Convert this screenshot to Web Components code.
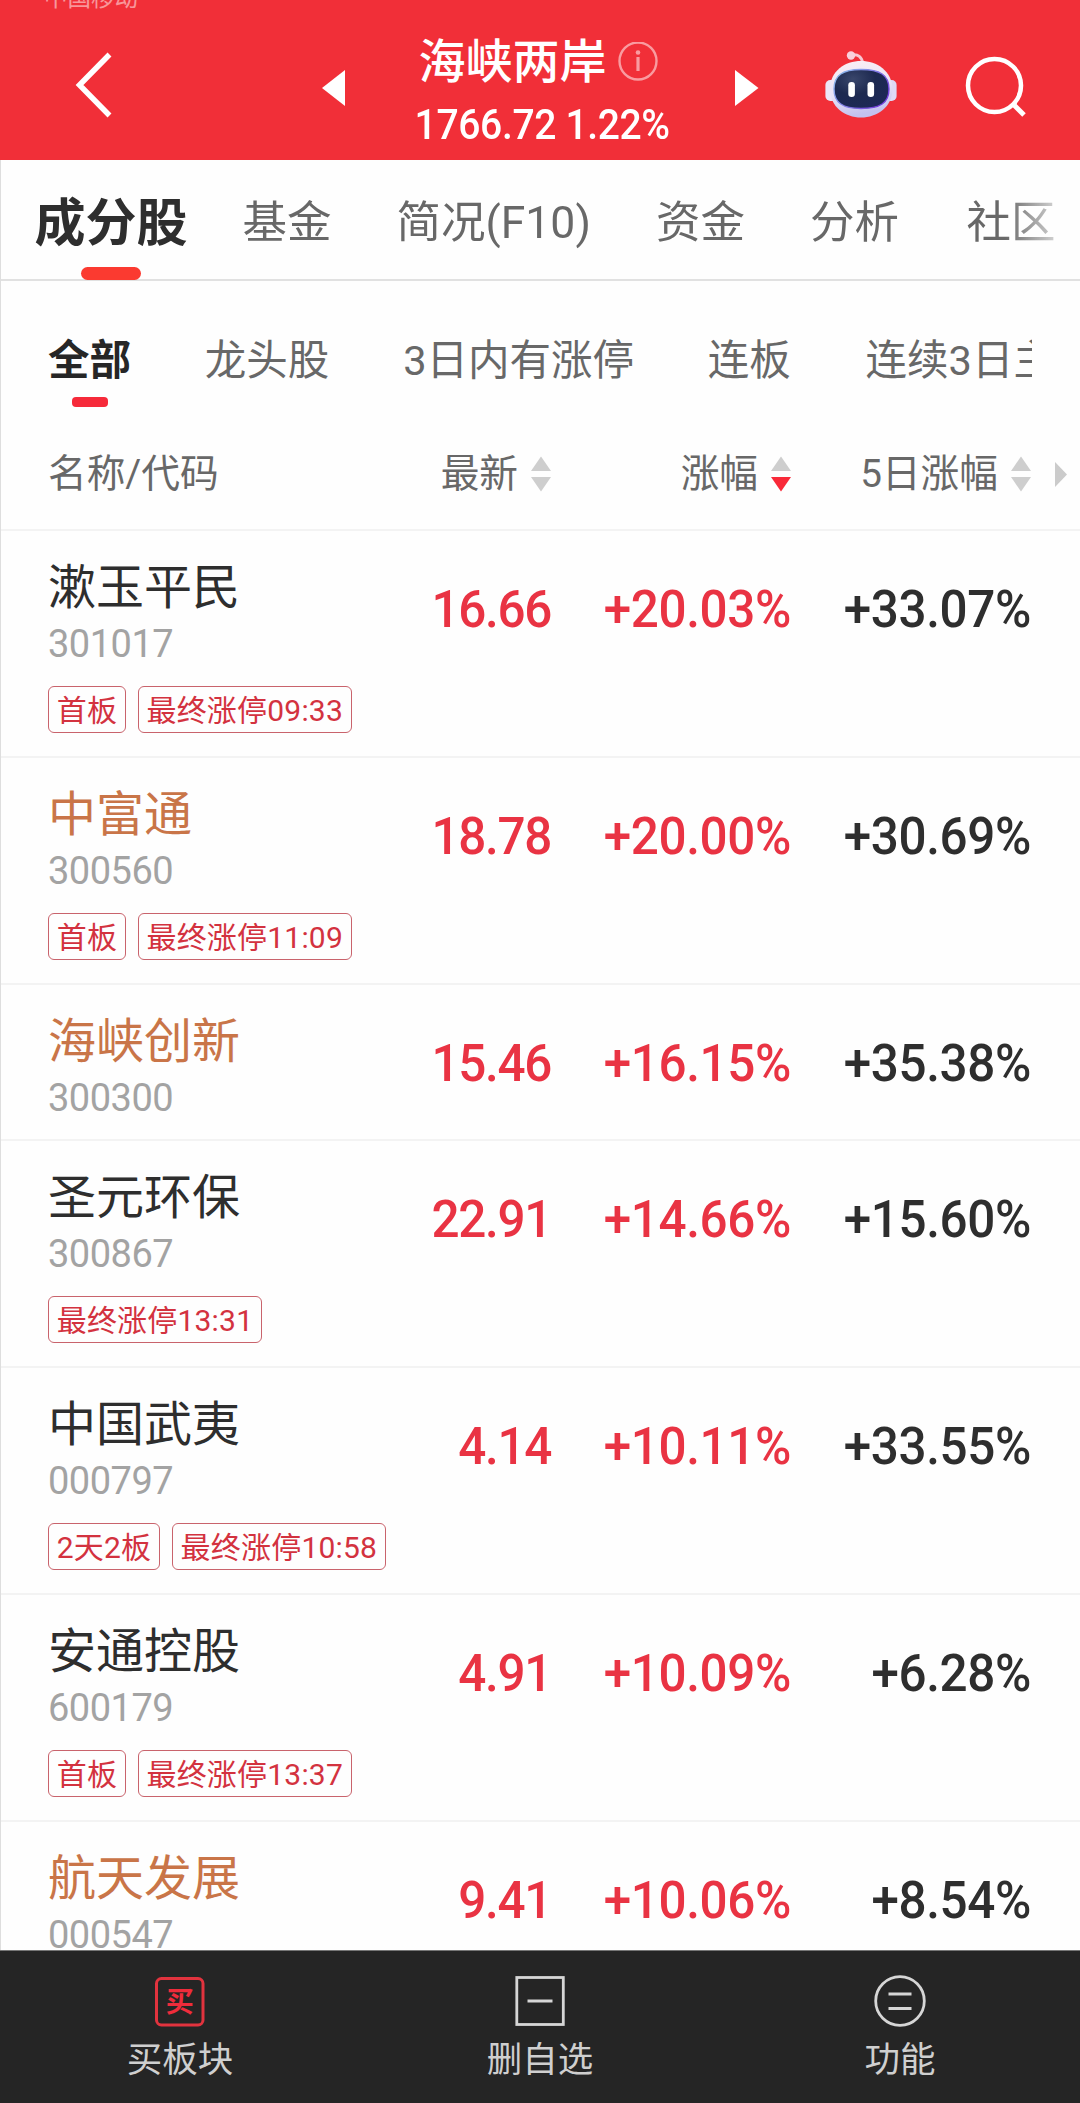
<!DOCTYPE html>
<html lang="zh-CN">
<head>
<meta charset="utf-8">
<title>海峡两岸</title>
<style>
    html, body {
        margin: 0;
        padding: 0;
        background: #fefefe;
    }
    body {
        width: 1080px;
        height: 2103px;
        overflow: hidden;
        font-family: Roboto, "Noto Sans CJK SC", sans-serif;
        color: #2e2e2e;
    }
</style>
</head>
<body>
<stock-app>
    <board-header slot="header" carrier="中国移动" name="海峡两岸" quote="1766.72 1.22%"></board-header>

    <tab-strip slot="tabs">
        <tab-item active>成分股</tab-item>
        <tab-item>基金</tab-item>
        <tab-item>简况(F10)</tab-item>
        <tab-item>资金</tab-item>
        <tab-item>分析</tab-item>
        <tab-item>社区</tab-item>
    </tab-strip>

    <filter-strip slot="filters">
        <filter-item active>全部</filter-item>
        <filter-item>龙头股</filter-item>
        <filter-item>3日内有涨停</filter-item>
        <filter-item>连板</filter-item>
        <filter-item>连续3日主</filter-item>
    </filter-strip>

    <list-head slot="head">
        <span>名称/代码</span>
        <sort-label slot="cols">最新</sort-label>
        <sort-label slot="cols" dir="down">涨幅</sort-label>
        <sort-label slot="cols">5日涨幅</sort-label>
    </list-head>

    <stock-row name="漱玉平民" code="301017" price="16.66" change="+20.03%" five="+33.07%">
        <stock-tag>首板</stock-tag><stock-tag>最终涨停09:33</stock-tag>
    </stock-row>
    <stock-row hot name="中富通" code="300560" price="18.78" change="+20.00%" five="+30.69%">
        <stock-tag>首板</stock-tag><stock-tag>最终涨停11:09</stock-tag>
    </stock-row>
    <stock-row hot name="海峡创新" code="300300" price="15.46" change="+16.15%" five="+35.38%"></stock-row>
    <stock-row name="圣元环保" code="300867" price="22.91" change="+14.66%" five="+15.60%">
        <stock-tag>最终涨停13:31</stock-tag>
    </stock-row>
    <stock-row name="中国武夷" code="000797" price="4.14" change="+10.11%" five="+33.55%">
        <stock-tag>2天2板</stock-tag><stock-tag>最终涨停10:58</stock-tag>
    </stock-row>
    <stock-row name="安通控股" code="600179" price="4.91" change="+10.09%" five="+6.28%">
        <stock-tag>首板</stock-tag><stock-tag>最终涨停13:37</stock-tag>
    </stock-row>
    <stock-row hot name="航天发展" code="000547" price="9.41" change="+10.06%" five="+8.54%"></stock-row>

    <bottom-bar slot="footer">
        <bar-button icon="buy">买板块</bar-button>
        <bar-button icon="remove">删自选</bar-button>
        <bar-button icon="menu">功能</bar-button>
    </bottom-bar>
</stock-app>

<script>
(function () {
    // registers an element whose shadow root is a clone of the given markup
    function define(name, html, setup) {
        const template = document.createElement("template");
        template.innerHTML = html;
        customElements.define(name, class extends HTMLElement {
            constructor() {
                super();
                this.attachShadow({ mode: "open" }).appendChild(template.content.cloneNode(true));
            }
            connectedCallback() {
                if (setup) setup(this, this.shadowRoot);
            }
        });
    }

    // copies attributes into the elements with the same id
    function fill(host, root, names) {
        names.forEach(n => {
            root.getElementById(n).textContent = host.getAttribute(n) || "";
        });
    }

    define("stock-app", `
        <style>
            :host {
                display: flex;
                flex-direction: column;
                box-sizing: border-box;
                width: 1080px;
                height: 2103px;
                overflow: hidden;
            }
            .main {
                flex: 1;
                min-height: 0;
                overflow: hidden;
                box-sizing: border-box;
                border-left: 1px solid #dedede;
            }
        </style>
        <slot name="header"></slot>
        <div class="main">
            <slot name="tabs"></slot>
            <slot name="filters"></slot>
            <slot name="head"></slot>
            <slot></slot>
        </div>
        <slot name="footer"></slot>
    `);

    define("board-header", `
        <style>
            :host {
                display: flex;
                flex-direction: column;
                flex: none;
                height: 160px;
                box-sizing: border-box;
                overflow: hidden;
                background: #f12f38;
                color: #fff;
            }
            #carrier {
                margin: -14px 0 0 44px;
                height: 24px;
                line-height: 24px;
                font-size: 23.5px;
                color: rgba(255,255,255,0.5);
            }
            .bar {
                display: grid;
                grid-template-columns: 322px 23px 390px 23px 66px 74px 67px 1fr;
                align-items: center;
                height: 150px;
            }
            svg { display: block; }
            .back { margin-left: 74px; }
            .arrow { padding-top: 5px; }
            .title {
                display: flex;
                flex-direction: column;
                align-items: center;
                padding-top: 16px;
            }
            .line {
                display: flex;
                align-items: center;
                gap: 11px;
                height: 64px;
                margin-left: -4px;
            }
            #name {
                font-size: 47px;
                line-height: 64px;
                font-weight: 500;
            }
            #quote {
                font-size: 42px;
                line-height: 62px;
                font-weight: 500;
                letter-spacing: -0.4px;
                margin-left: 4px;
                white-space: nowrap;
                transform: scaleX(0.93);
            }
        </style>
        <div id="carrier"></div>
        <div class="bar">
            <svg class="back" width="40" height="70" viewBox="0 0 40 70">
                <path d="M35.5 4.5L5.5 35L35.5 65.5" fill="none" stroke="#fff" stroke-width="5.5"/>
            </svg>
            <svg class="arrow" width="23" height="36" viewBox="0 0 23 36"><path d="M0 18L23 0V36Z" fill="#fff"/></svg>
            <div class="title">
                <div class="line">
                    <span id="name"></span>
                    <svg width="40" height="40" viewBox="0 0 40 40">
                        <circle cx="20" cy="19" r="18.5" fill="none" stroke="#f99ba0" stroke-width="2.4"/>
                        <circle cx="20" cy="10.5" r="2.3" fill="#f99ba0"/>
                        <path d="M20 15V29" stroke="#f99ba0" stroke-width="3.2"/>
                    </svg>
                </div>
                <span id="quote"></span>
            </div>
            <svg class="arrow" width="24" height="36" viewBox="0 0 24 36"><path d="M23.5 18L0 0V36Z" fill="#fff"/></svg>
            <span></span>
            <svg width="74" height="70" viewBox="824 50 74 70">
                <defs>
                    <linearGradient id="shell" x1="0" y1="0" x2="0.25" y2="1">
                        <stop offset="0" stop-color="#fdeff4"/>
                        <stop offset="0.6" stop-color="#e8e3f6"/>
                        <stop offset="1" stop-color="#c3c2ef"/>
                    </linearGradient>
                    <linearGradient id="rim" x1="0" y1="0" x2="1" y2="0.6">
                        <stop offset="0" stop-color="#8fc6ee"/>
                        <stop offset="1" stop-color="#7440dc"/>
                    </linearGradient>
                    <radialGradient id="face" cx="0.35" cy="0.25" r="0.8">
                        <stop offset="0" stop-color="#39466b"/>
                        <stop offset="0.5" stop-color="#1d2950"/>
                        <stop offset="1" stop-color="#1c2857"/>
                    </radialGradient>
                </defs>
                <path d="M852 55C858 54 862 57 862.5 63" fill="none" stroke="#f8c6d2" stroke-width="3"/>
                <circle cx="851" cy="55.5" r="4.2" fill="#f9cfdb"/>
                <rect x="825.4" y="80" width="14" height="21" rx="5" fill="#ece6f7"/>
                <rect x="882.6" y="80" width="14" height="21" rx="5" fill="#dedaf6"/>
                <path d="M861 61C877 61 892 71 892.5 89C892.5 107 877 117.5 861 117.5C845 117.5 830 107 830 89C830 71 845 61 861 61Z" fill="url(#shell)"/>
                <path d="M861 69.5C880 69.5 889 75 889 89C889 103 880 108.5 861 108.5C843 108.5 834 103 834 89C834 75 843 69.5 861 69.5Z" fill="url(#face)" stroke="url(#rim)" stroke-width="1.4"/>
                <rect x="848.3" y="82" width="6.6" height="15" rx="3.2" fill="#fff"/>
                <rect x="867.5" y="82" width="6.6" height="15" rx="3.2" fill="#fff"/>
            </svg>
            <span></span>
            <svg width="64" height="66" viewBox="965 52 64 66">
                <circle cx="994.5" cy="85.5" r="26.5" fill="none" stroke="#fff" stroke-width="4.5"/>
                <path d="M1013 104L1024 115" stroke="#fff" stroke-width="5"/>
            </svg>
        </div>
    `, (host, root) => fill(host, root, ["carrier", "name", "quote"]));

    define("tab-strip", `
        <style>
            :host {
                display: block;
                height: 121px;
                box-sizing: border-box;
                border-bottom: 2px solid #e1e1e1;
            }
            .scroll {
                display: flex;
                gap: 65px;
                width: 1020px;
                margin-left: 33.5px;
                height: 121px;
                overflow: hidden;
                -webkit-mask-image: linear-gradient(90deg, #000 970px, rgba(0,0,0,0.3) 1020px);
                mask-image: linear-gradient(90deg, #000 970px, rgba(0,0,0,0.3) 1020px);
            }
        </style>
        <div class="scroll"><slot></slot></div>
    `);

    define("tab-item", `
        <style>
            :host {
                display: flex;
                flex: none;
                flex-direction: column;
                align-items: center;
                font-size: 44.5px;
                color: #686868;
                white-space: nowrap;
            }
            :host(:last-child) { margin-left: 2.5px; }
            .label { line-height: 107px; padding-top: 10px; height: 97px; }
            .mark { width: 60px; height: 12.5px; border-radius: 7px; }
            :host([active]) {
                font-size: 51px;
                font-weight: 700;
                color: #2e2e2e;
                margin-right: -10px;
            }
            :host([active]) .mark { background: #fb3a30; }
        </style>
        <div class="label"><slot></slot></div>
        <div class="mark"></div>
    `);

    define("filter-strip", `
        <style>
            :host {
                display: flex;
                gap: 73.8px;
                height: 149px;
                margin: 0 48px 0 47px;
                overflow: hidden;
            }
        </style>
        <slot></slot>
    `);

    define("filter-item", `
        <style>
            :host {
                display: flex;
                flex: none;
                flex-direction: column;
                align-items: center;
                font-size: 41.5px;
                color: #686868;
                white-space: nowrap;
            }
            :host(:last-child) { margin-left: 1px; }
            .label { padding-top: 50px; height: 66px; line-height: 60px; }
            .mark { width: 36px; height: 10px; border-radius: 4px; }
            :host([active]) { font-weight: 700; color: #262626; }
            :host([active]) .mark { background: #f62a3a; }
        </style>
        <div class="label"><slot></slot></div>
        <div class="mark"></div>
    `);

    define("list-head", `
        <style>
            :host {
                display: grid;
                grid-template-columns: 1fr 150px 240px 240px 36px;
                align-items: center;
                height: 99px;
                box-sizing: border-box;
                padding: 0 13px 11px 47px;
                font-size: 38.7px;
                line-height: 60px;
                color: #686868;
            }
            svg { display: block; justify-self: end; }
        </style>
        <slot></slot>
        <slot name="cols"></slot>
        <svg width="12" height="25" viewBox="0 0 12 25"><path d="M0 0L12 12.5L0 25Z" fill="#cbcbcb"/></svg>
    `);

    define("sort-label", `
        <style>
            :host {
                display: flex;
                justify-content: flex-end;
                align-items: center;
                gap: 13px;
                white-space: nowrap;
            }
            svg { display: block; }
            path { fill: #cecece; }
            :host([dir="down"]) .down { fill: #f92a39; }
        </style>
        <slot></slot>
        <svg width="20" height="36" viewBox="0 0 20 36">
            <path d="M0 15L10 0.5L20 15Z"/>
            <path class="down" d="M0 21L10 35.5L20 21Z"/>
        </svg>
    `);

    define("stock-row", `
        <style>
            :host {
                display: grid;
                grid-template-columns: 1fr 150px 240px 240px;
                box-sizing: border-box;
                min-height: 156px;
                border-top: 2px solid #f3f3f3;
                padding: 23px 49px 0 47px;
                --tone: #2e2e2e;
            }
            :host([hot]) { --tone: #c97548; }
            #name {
                font-size: 48px;
                line-height: 67px;
                height: 65px;
                color: var(--tone);
                white-space: nowrap;
            }
            #code {
                font-size: 38px;
                line-height: 50px;
                letter-spacing: -0.5px;
                color: #a3a3a3;
            }
            .tags {
                display: flex;
                gap: 12px;
                padding-top: 17px;
                white-space: nowrap;
            }
            .num {
                padding-top: 26px;
                font-size: 52px;
                line-height: 60px;
                height: 60px;
                font-weight: 500;
                letter-spacing: -0.4px;
                text-align: right;
                white-space: nowrap;
                color: #e93343;
                transform: scaleX(0.95);
                transform-origin: right center;
            }
            #price { letter-spacing: -1.4px; }
            #five { color: #2e2e2e; }
        </style>
        <div>
            <div id="name"></div>
            <div id="code"></div>
            <div class="tags"><slot></slot></div>
        </div>
        <div class="num" id="price"></div>
        <div class="num" id="change"></div>
        <div class="num" id="five"></div>
    `, (host, root) => {
        fill(host, root, ["name", "code", "price", "change", "five"]);
        if (host.querySelector("stock-tag")) {
            host.style.height = "227px";
        } else {
            root.querySelector(".tags").style.display = "none";
        }
    });

    define("stock-tag", `
        <style>
            :host {
                display: block;
                box-sizing: border-box;
                height: 47px;
                padding: 0 7.7px;
                border: 1.5px solid #c9636c;
                border-radius: 6px;
                font-size: 30px;
                line-height: 47px;
                letter-spacing: 0.2px;
                color: #d3323f;
            }
        </style>
        <slot></slot>
    `);

    define("bottom-bar", `
        <style>
            :host {
                display: grid;
                grid-template-columns: repeat(3, 1fr);
                flex: none;
                height: 153px;
                box-sizing: border-box;
                border-top: 1px solid #777;
                background: #252525;
            }
        </style>
        <slot></slot>
    `);

    const icons = {
        buy: `
            <rect x="2.5" y="4.5" width="46.5" height="46.5" rx="5" fill="none" stroke="#e2333e" stroke-width="3"/>
            <text x="25.8" y="38" text-anchor="middle" font-size="28" font-weight="700" fill="#ef2c3b">买</text>`,
        remove: `
            <rect x="2.8" y="3.5" width="46.5" height="47" fill="none" stroke="#d6d6d6" stroke-width="2.8"/>
            <path d="M13.5 27H38.5" stroke="#d6d6d6" stroke-width="3"/>`,
        menu: `
            <circle cx="26" cy="27" r="24.3" fill="none" stroke="#d6d6d6" stroke-width="2.8"/>
            <path d="M14.5 20H37.5M14.5 34.5H37.5" stroke="#d6d6d6" stroke-width="3"/>`
    };

    define("bar-button", `
        <style>
            :host {
                display: flex;
                flex-direction: column;
                align-items: center;
                padding-top: 23px;
                font-size: 35.5px;
                line-height: 54px;
                color: #cfcfcf;
            }
            svg { display: block; margin-bottom: 5px; }
        </style>
        <svg width="53" height="54" viewBox="0 0 53 54"></svg>
        <span><slot></slot></span>
    `, (host, root) => {
        root.querySelector("svg").innerHTML = icons[host.getAttribute("icon")];
    });
})();
</script>
</body>
</html>
